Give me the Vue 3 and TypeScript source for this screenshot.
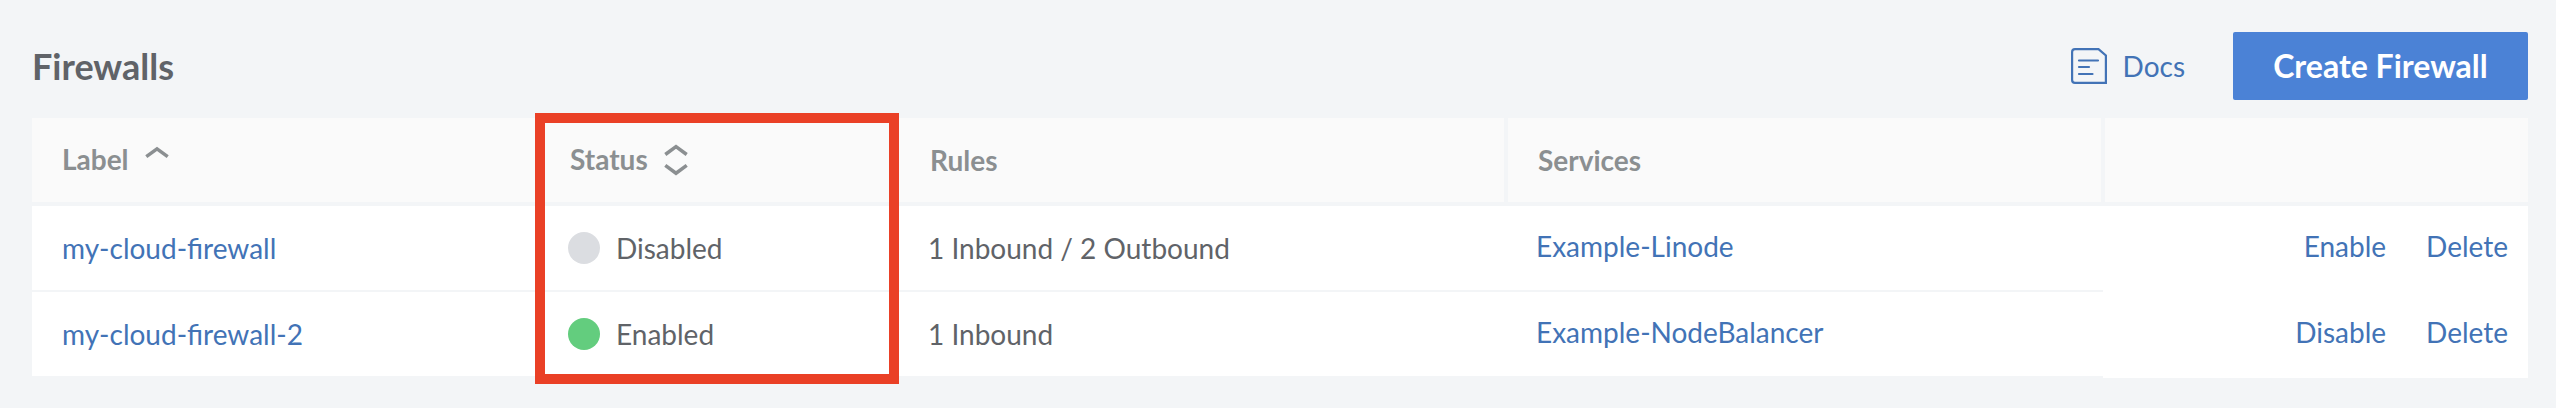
<script setup lang="ts">
interface Firewall {
  label: string
  status: 'Enabled' | 'Disabled'
  rules: string
  service: string
}

const firewalls: Firewall[] = [
  { label: 'my-cloud-firewall', status: 'Disabled', rules: '1 Inbound / 2 Outbound', service: 'Example-Linode' },
  { label: 'my-cloud-firewall-2', status: 'Enabled', rules: '1 Inbound', service: 'Example-NodeBalancer' },
]
</script>

<template>
  <main class="page">
    <header class="toolbar">
      <h1 class="title">Firewalls</h1>
      <a class="docs">
        <svg class="docs-icon" viewBox="0 0 36 36" width="36" height="36" fill="none" stroke="currentColor" stroke-width="2.2">
          <path d="M4 1.100H27.500L34.900 7.500V34.900H4Q1.100 34.900 1.100 32V4Q1.100 1.100 4 1.100Z" />
          <path d="M8 12.500H27M8 19H18M8 26H21.500" stroke-linecap="round" />
        </svg>
        <span>Docs</span>
      </a>
      <button class="create" type="button">Create Firewall</button>
    </header>

    <section class="table">
      <div class="row head">
        <div class="cell sortable">
          <span>Label</span>
          <svg viewBox="0 0 24 34" width="24" height="34" fill="none" stroke="currentColor" stroke-width="3.500">
            <path d="M1.300 14.700L12 6.900L22.700 14.700" />
          </svg>
        </div>
        <div class="cell sortable">
          <span>Status</span>
          <svg viewBox="0 0 24 34" width="24" height="34" fill="none" stroke="currentColor" stroke-width="3.500">
            <path d="M1.300 12.500L12 4.600L22.700 12.500M1.300 23.300L12 31.200L22.700 23.300" />
          </svg>
        </div>
        <div class="cell rules">Rules</div>
        <div class="cell divided">Services</div>
        <div class="cell divided"></div>
      </div>

      <div v-for="fw in firewalls" :key="fw.label" class="row body">
        <div class="cell"><a class="link">{{ fw.label }}</a></div>
        <div class="cell status">
          <span class="dot" :class="fw.status.toLowerCase()"></span>
          <span>{{ fw.status }}</span>
        </div>
        <div class="cell">{{ fw.rules }}</div>
        <div class="cell service"><a class="link">{{ fw.service }}</a></div>
        <div class="cell actions">
          <a class="link">{{ fw.status === 'Enabled' ? 'Disable' : 'Enable' }}</a>
          <a class="link">Delete</a>
        </div>
      </div>
      <div class="highlight"></div>
    </section>
  </main>
</template>

<style>
body {
  margin: 0;
  background: #f3f5f7;
}
</style>

<style scoped>
.page {
  box-sizing: border-box;
  width: 2556px;
  height: 408px;
  padding: 32px 28px 0 32px;
  overflow: hidden;
  background: #f3f5f7;
  color: #606368;
  font-family: Lato, "Liberation Sans", sans-serif;
  font-size: 28px;
}

.toolbar {
  display: flex;
  align-items: center;
  height: 68px;
  margin-bottom: 18px;
}

.title {
  margin: 0 auto 0 0;
  font-size: 36px;
  line-height: 68px;
  font-weight: 700;
}

.docs {
  display: flex;
  align-items: center;
  gap: 16px;
  margin-right: 48px;
  color: #4273b6;
}

.docs-icon {
  display: block;
}

.create {
  width: 295px;
  height: 68px;
  padding: 0;
  border: 0;
  border-radius: 2px;
  background: #4b82d6;
  color: #fff;
  font: 700 32px/66px Lato, "Liberation Sans", sans-serif;
}

.table {
  position: relative;
}

.row {
  display: grid;
  grid-template-columns: 506px 360px 607px 598px 425px;
}

.cell {
  box-sizing: border-box;
  display: flex;
  align-items: center;
  height: 84px;
  padding-left: 30px;
  line-height: 34px;
  white-space: nowrap;
}

.head {
  grid-template-columns: 508px 358px 606px 597px 427px;
  border-bottom: 4px solid #f3f5f7;
  background: #fafafa;
  color: #8b8f91;
  font-weight: 700;
}

.head .rules {
  padding-left: 32px;
}

.divided {
  border-left: 4px solid #f3f5f7;
}

.sortable {
  gap: 16px;
  padding-bottom: 2px;
}

.body .cell {
  height: 86px;
  border-bottom: 2px solid #f3f5f7;
  background: #fff;
}

.link {
  color: #4273b6;
}

.status {
  gap: 16px;
}

.dot {
  width: 32px;
  height: 32px;
  border-radius: 50%;
}

.dot.disabled {
  background: #dbdde1;
}

.dot.enabled {
  background: #63cd7e;
}

.body .service {
  padding-left: 31px;
  padding-bottom: 4px;
}

.body .actions {
  justify-content: flex-end;
  gap: 40px;
  padding: 0 20px 6px 0;
  border-bottom: 0;
}

/* Callout frame drawn over the status column */
.highlight {
  position: absolute;
  top: -5px;
  left: 503px;
  box-sizing: border-box;
  width: 364px;
  height: 271px;
  border: 10px solid #ea4026;
}
</style>
